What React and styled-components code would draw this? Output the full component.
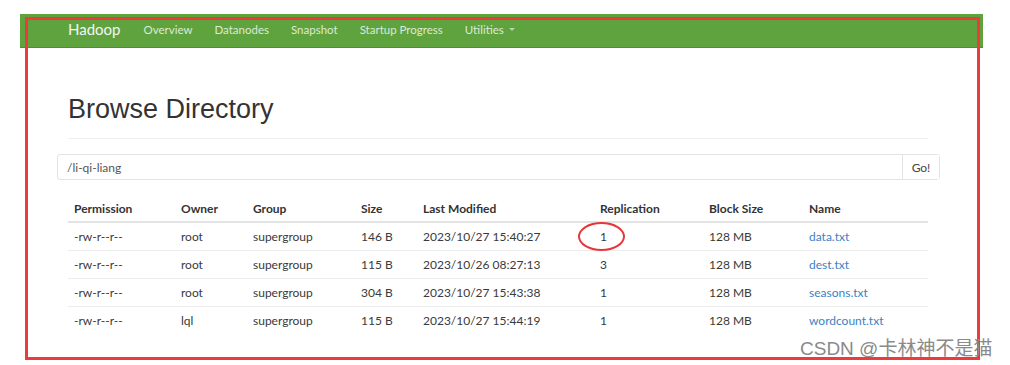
import styled, { createGlobalStyle } from "styled-components";

const Global = createGlobalStyle`
  body {
    margin: 0;
    background: #fff;
    font-family: Lato, "Open Sans", sans-serif;
    color: #333;
  }
`;

const Page = styled.div`
  position: relative;
  width: 1010px;
  height: 365px;
  padding: 14px 0 0 20px;
  box-sizing: border-box;
  overflow: hidden;
`;

const Navbar = styled.nav`
  width: 963px;
  height: 34px;
  background: #5fa33e;
  border-bottom: 1px solid #4f8c33;
  box-sizing: border-box;
  display: flex;
  align-items: center;
  padding: 0 0 3px 48px;
`;

const Brand = styled.span`
  color: #f4f4f4;
  font-size: 15px;
  margin-right: 23px;
`;

const NavLink = styled.span`
  color: #dde9d6;
  font-size: 11.5px;
  margin-right: 22px;
  display: flex;
  align-items: center;
  gap: 5px;
`;

const Caret = styled.span`
  width: 0;
  height: 0;
  border-left: 3px solid transparent;
  border-right: 3px solid transparent;
  border-top: 3px solid #b9d3ab;
`;

const Container = styled.div`
  padding: 46px 0 0 37px;
  width: 884px;
`;

const Header = styled.div`
  margin-left: 11px;
  width: 860px;
  border-bottom: 1px solid #eee;
  padding-bottom: 14px;
`;

const Title = styled.h1`
  margin: 0;
  font-family: "Liberation Sans", Arial, sans-serif;
  font-weight: 400;
  font-size: 27px;
  line-height: 30px;
  color: #333;
`;

const InputGroup = styled.div`
  display: flex;
  margin-top: 15px;
  height: 26px;
  width: 883px;
  border: 1px solid #e3e3e3;
  border-radius: 3px;
  box-sizing: border-box;
`;

const PathInput = styled.div`
  flex: 1;
  display: flex;
  align-items: center;
  padding-left: 9px;
  font-size: 12px;
  color: #555;
`;

const GoButton = styled.div`
  width: 36px;
  border-left: 1px solid #e3e3e3;
  display: flex;
  align-items: center;
  justify-content: center;
  font-size: 12px;
  color: #444;
  background: #fff;
`;

const Table = styled.table`
  margin: 15px 0 0 11px;
  width: 860px;
  table-layout: fixed;
  border-collapse: collapse;
  font-size: 12px;
`;

const Th = styled.th`
  box-sizing: border-box;
  text-align: left;
  font-weight: 700;
  padding: 0 6px;
  height: 27px;
  border-bottom: 2px solid #e3e3e3;
  width: ${(p) => p.$w}px;
`;

const Tr = styled.tr`
  & + & td {
    border-top: 1px solid #ececec;
  }
`;

const Td = styled.td`
  padding: 0 6px;
  height: 27px;
  position: relative;
  white-space: nowrap;
  color: #3a3a3a;
`;

const NameLink = styled.a`
  color: #3b82c4;
  text-decoration: none;
`;

const Circle = styled.span`
  position: absolute;
  left: -16px;
  top: -1px;
  width: 47px;
  height: 29px;
  border: 2px solid #e8353a;
  border-radius: 50%;
  box-sizing: border-box;
`;

const Frame = styled.div`
  position: absolute;
  left: 25px;
  top: 17px;
  width: 955px;
  height: 343px;
  border: 3px solid #f0393c;
  box-sizing: border-box;
  pointer-events: none;
`;

const Watermark = styled.div`
  position: absolute;
  left: 800px;
  top: 333px;
  font-family: "Liberation Sans", "Noto Sans CJK SC", sans-serif;
  font-size: 19px;
  color: #8a8a8a;
  white-space: nowrap;
`;

const columns = [
  ["Permission", 107],
  ["Owner", 72],
  ["Group", 108],
  ["Size", 62],
  ["Last Modified", 177],
  ["Replication", 109],
  ["Block Size", 100],
  ["Name", 125],
];

const rows = [
  ["-rw-r--r--", "root", "supergroup", "146 B", "2023/10/27 15:40:27", "1", "128 MB", "data.txt"],
  ["-rw-r--r--", "root", "supergroup", "115 B", "2023/10/26 08:27:13", "3", "128 MB", "dest.txt"],
  ["-rw-r--r--", "root", "supergroup", "304 B", "2023/10/27 15:43:38", "1", "128 MB", "seasons.txt"],
  ["-rw-r--r--", "lql", "supergroup", "115 B", "2023/10/27 15:44:19", "1", "128 MB", "wordcount.txt"],
];

export default function App() {
  return (
    <Page>
      <Global />
      <Navbar>
        <Brand>Hadoop</Brand>
        <NavLink>Overview</NavLink>
        <NavLink>Datanodes</NavLink>
        <NavLink>Snapshot</NavLink>
        <NavLink>Startup Progress</NavLink>
        <NavLink>
          Utilities <Caret />
        </NavLink>
      </Navbar>
      <Container>
        <Header>
          <Title>Browse Directory</Title>
        </Header>
        <InputGroup>
          <PathInput>/li-qi-liang</PathInput>
          <GoButton>Go!</GoButton>
        </InputGroup>
        <Table>
          <thead>
            <tr>
              {columns.map(([c, w]) => (
                <Th key={c} $w={w}>
                  {c}
                </Th>
              ))}
            </tr>
          </thead>
          <tbody>
            {rows.map((r, i) => (
              <Tr key={i}>
                {r.map((v, j) => (
                  <Td key={j}>
                    {j === 7 ? <NameLink href="#">{v}</NameLink> : v}
                    {i === 0 && j === 5 && <Circle />}
                  </Td>
                ))}
              </Tr>
            ))}
          </tbody>
        </Table>
      </Container>
      <Frame />
      <Watermark>CSDN @卡林神不是猫</Watermark>
    </Page>
  );
}
